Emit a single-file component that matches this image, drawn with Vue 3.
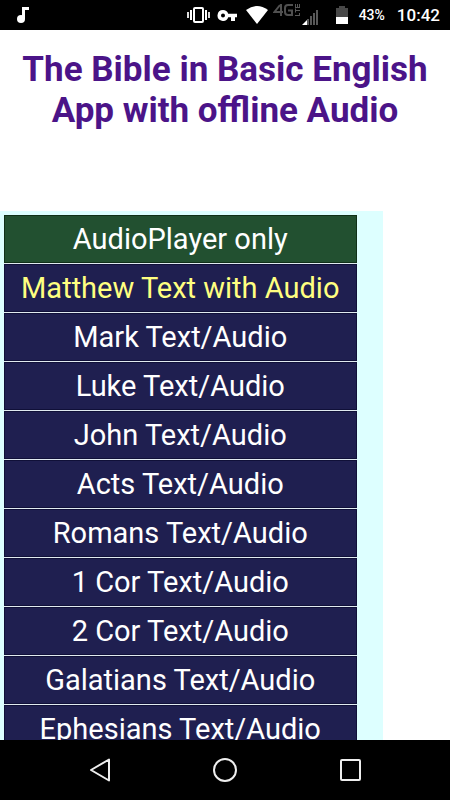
<script setup>
const books = ['Mark', 'Luke', 'John', 'Acts', 'Romans', '1 Cor', '2 Cor', 'Galatians', 'Ephesians']
const items = [
  { label: 'AudioPlayer only', href: '#player', kind: 'player' },
  { label: 'Matthew Text with Audio', href: '#matthew', kind: 'current' },
  ...books.map((name) => ({
    label: `${name} Text/Audio`,
    href: `#${name.toLowerCase().replace(' ', '-')}`,
    kind: 'book',
  })),
]
</script>

<template>
  <div class="screen">
    <header class="status">
      <svg class="note" width="14" height="18" viewBox="0 0 14 18" aria-hidden="true">
        <circle cx="5" cy="13" r="4" fill="#fff" />
        <path d="M6 1h7v3H9v9H6z" fill="#fff" />
      </svg>
      <div class="icons">
        <svg width="24" height="18" viewBox="0 0 24 18" aria-hidden="true">
          <rect x="7" y="2" width="9" height="14" rx="1" fill="none" stroke="#fff" stroke-width="2" />
          <path d="M4 4v10M19 4v10" stroke="#fff" stroke-width="2" />
          <path d="M1 6v6M22 6v6" stroke="#ddd" stroke-width="2" />
        </svg>
        <svg class="key" width="21" height="13" viewBox="0 0 21 13" aria-hidden="true">
          <path
            fill="#fff"
            fill-rule="evenodd"
            d="M6 1a5.500 5.500 0 1 0 5.200 7.300H14V12h4V8.300h2V4.700h-8.800A5.500 5.500 0 0 0 6 1zM6 4.500a2 2 0 1 1 0 4 2 2 0 0 1 0-4z"
          />
        </svg>
        <svg class="wifi" width="22" height="18" viewBox="0 0 22 18" aria-hidden="true">
          <path d="M0 4Q11-4 22 4L11 18z" fill="#fff" />
        </svg>
        <svg class="lte" width="46" height="22" viewBox="0 0 46 22" aria-hidden="true">
          <g fill="none" stroke="#505050" stroke-width="2">
            <path d="M7 1L1.500 8H10M8 0v12" />
            <path d="M20 1h-5q-3 0-3 3v4q0 3 3 3h4V6.500h-4" />
          </g>
          <g fill="none" stroke="#585858" stroke-width="1">
            <path d="M22 11.500h5M26.500 12V9M22.500 8.500v-4M22 6.500h5M22.500 3.500V0M24.500 3.500V0M26.500 3.500V0M22 3.500h5" />
          </g>
          <path d="M35 21v-6M38 21v-9M41 21V9M44 21V6" stroke="#585858" stroke-width="2" />
          <path d="M29 21l5-5v5z" fill="#fff" />
        </svg>
        <svg class="battery" width="12" height="19" viewBox="0 0 12 19" aria-hidden="true">
          <path d="M3 0h6v2h3v10H0V2h3z" fill="#484848" />
          <path d="M0 11h12v7H0z" fill="#fff" />
        </svg>
        <span class="percent">43%</span>
        <time class="clock">10:42</time>
      </div>
    </header>

    <main class="content">
      <h1>The Bible in Basic English App with offline Audio</h1>
      <nav class="panel">
        <a v-for="item in items" :key="item.label" :href="item.href" class="row" :class="item.kind">{{ item.label }}</a>
      </nav>
    </main>

    <footer class="navbar">
      <button type="button" aria-label="Back">
        <svg width="24" height="26" viewBox="0 0 24 26">
          <path d="M21 2.500v21L3 13z" fill="none" stroke="#eee" stroke-width="2" stroke-linejoin="round" />
        </svg>
      </button>
      <button type="button" aria-label="Home">
        <svg width="24" height="26" viewBox="0 0 24 26">
          <circle cx="12" cy="13" r="11" fill="none" stroke="#eee" stroke-width="2" />
        </svg>
      </button>
      <button type="button" aria-label="Recent apps">
        <svg width="24" height="26" viewBox="0 0 24 26">
          <rect x="3" y="3" width="19" height="20" rx="1" fill="none" stroke="#eee" stroke-width="2" />
        </svg>
      </button>
    </footer>
  </div>
</template>

<style>
body {
  background: #fff;
}
</style>

<style scoped>
.screen {
  display: flex;
  flex-direction: column;
  height: 100vh;
  font-family: Roboto, "Liberation Sans", sans-serif;
}
.status {
  display: flex;
  flex: none;
  align-items: center;
  justify-content: space-between;
  height: 30px;
  padding: 0 10px 0 16px;
  background: #000;
  color: #fff;
}
.icons {
  display: flex;
  align-items: center;
}
.key {
  margin-left: 6px;
}
.wifi {
  margin-left: 8px;
}
.lte {
  margin-left: 5px;
}
.battery {
  margin-left: 17px;
}
.percent {
  margin-left: 11px;
  font-size: 14px;
  font-weight: 500;
}
.clock {
  margin-left: 12px;
  font-size: 17px;
  font-weight: 500;
}
.content {
  flex: 1;
  min-height: 0;
  overflow: hidden;
}
h1 {
  margin: 0;
  padding: 19px 16px 80px;
  color: #4b1488;
  font-size: 35px;
  font-weight: 700;
  line-height: 41px;
  text-align: center;
}
.panel {
  display: flex;
  flex-direction: column;
  gap: 1px;
  box-sizing: border-box;
  width: 85%;
  padding: 4px 26px 4px 4px;
  background: #dff;
}
.row {
  border: 1px solid #101038;
  background: #1f1f50;
  box-shadow: 0 1px #e0eaf0;
  color: #fff;
  font-size: 29px;
  line-height: 46px;
  text-align: center;
  text-decoration: none;
  white-space: nowrap;
}
.player {
  border-color: #103018;
  background: #225030;
}
.current {
  color: #ffff80;
}
.navbar {
  display: flex;
  flex: none;
  align-items: center;
  justify-content: center;
  gap: 101px;
  height: 60px;
  background: #000;
}
button {
  display: flex;
  padding: 0;
  border: 0;
  background: none;
}
</style>
